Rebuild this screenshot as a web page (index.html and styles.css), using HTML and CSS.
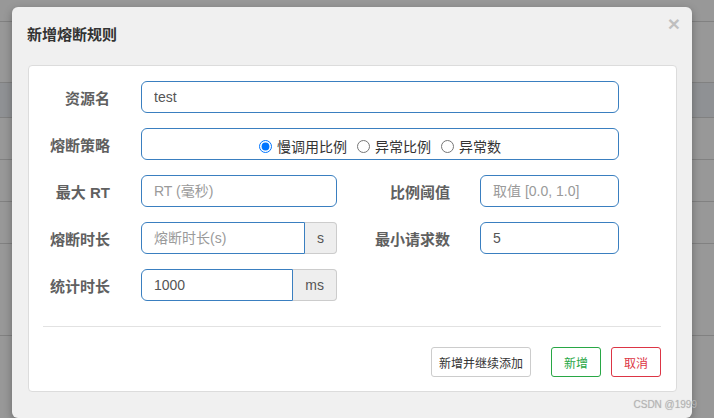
FILE: index.html
```html
<!DOCTYPE html>
<html lang="zh-CN">
<head>
<meta charset="utf-8">
<title>新增熔断规则</title>
<link rel="stylesheet" href="styles.css">
</head>
<body>
<div class="backdrop">
  <div class="bg-row h22"></div>
  <div class="bg-row h61"></div>
  <div class="bg-row h35 tint"></div>
  <div class="bg-row h42"></div>
  <div class="bg-row h42"></div>
  <div class="bg-row h42"></div>
  <div class="bg-row h92"></div>
  <div class="bg-row rest"></div>
</div>

<div class="modal">
  <div class="modal-header">
    <h4 class="modal-title">新增熔断规则</h4>
    <span class="close">×</span>
  </div>
  <div class="panel">
    <form class="form">
      <label class="lbl">资源名</label>
      <div class="field span3"><input class="inp" type="text" value="test"></div>

      <label class="lbl">熔断策略</label>
      <div class="radio-box span3">
        <label class="radio"><input type="radio" name="grade" checked>慢调用比例</label>
        <label class="radio"><input type="radio" name="grade">异常比例</label>
        <label class="radio"><input type="radio" name="grade">异常数</label>
      </div>

      <label class="lbl">最大 RT</label>
      <div class="field"><input class="inp" type="text" placeholder="RT (毫秒)"></div>
      <label class="lbl lbl-2">比例阈值</label>
      <div class="field"><input class="inp" type="text" placeholder="取值 [0.0, 1.0]"></div>

      <label class="lbl">熔断时长</label>
      <div class="group"><input class="inp" type="text" placeholder="熔断时长(s)"><span class="addon">s</span></div>
      <label class="lbl lbl-2">最小请求数</label>
      <div class="field"><input class="inp" type="text" value="5"></div>

      <label class="lbl">统计时长</label>
      <div class="group"><input class="inp" type="text" value="1000"><span class="addon">ms</span></div>
    </form>
    <div class="hr"></div>
    <div class="actions">
      <button class="btn btn-default wide" type="button">新增并继续添加</button>
      <button class="btn btn-success" type="button">新增</button>
      <button class="btn btn-danger" type="button">取消</button>
    </div>
  </div>
</div>

<div class="watermark">CSDN @1999</div>
</body>
</html>
```

FILE: styles.css
```css
* { box-sizing: border-box; }

html, body {
  margin: 0;
  padding: 0;
}

body {
  width: 714px;
  height: 418px;
  overflow: hidden;
  position: relative;
  font-family: "Liberation Sans", "Noto Sans CJK SC", sans-serif;
  background: #989898;
}

.backdrop {
  display: flex;
  flex-direction: column;
  height: 418px;
}

.bg-row {
  border-bottom: 1px solid #818181;
  background: #989898;
}
.bg-row.h22 { height: 22px; }
.bg-row.h61 { height: 61px; }
.bg-row.h35 { height: 35px; }
.bg-row.h42 { height: 42px; }
.bg-row.h92 { height: 92px; }
.bg-row.rest { flex: 1; border-bottom: none; }
.bg-row.tint { background: #8f9194; }

.modal {
  position: absolute;
  left: 12px;
  top: 7px;
  width: 680px;
  height: 411px;
  background: #f0f0f0;
  border-radius: 6px;
  box-shadow: 0 3px 9px rgba(0, 0, 0, 0.3);
}

.modal-header {
  height: 58px;
  padding: 18px 15px 0 15px;
  display: flex;
  justify-content: space-between;
  align-items: flex-start;
}

.modal-title {
  margin: 0;
  font-size: 15px;
  line-height: 20px;
  font-weight: bold;
  color: #333;
}

.close {
  margin-top: -12px;
  margin-right: -3px;
  font-size: 21px;
  line-height: 21px;
  font-weight: bold;
  color: #000;
  opacity: 0.2;
}

.panel {
  margin: 0 15px 0 16px;
  background: #fff;
  border: 1px solid #dcdcdc;
  border-radius: 4px;
  padding: 15px 15px 14px 14px;
}

.form {
  display: grid;
  grid-template-columns: 98px 196px 143px 139px;
  grid-auto-rows: 32px;
  row-gap: 15px;
  align-items: center;
}

.lbl {
  text-align: right;
  padding-right: 31px;
  padding-top: 4px;
  font-size: 15px;
  font-weight: bold;
  color: #606060;
  white-space: nowrap;
  line-height: 20px;
}

.lbl-2 { padding-right: 30px; }

.field, .group, .radio-box {
  height: 32px;
}

.span3 { grid-column: 2 / 5; }

.inp {
  width: 100%;
  height: 32px;
  border: 1px solid #3a7fc0;
  border-radius: 6px;
  padding: 0 12px;
  font-family: "Liberation Sans", "Noto Sans CJK SC", sans-serif;
  font-size: 14px;
  color: #555;
  background: #fff;
  outline: none;
}

.inp::placeholder { color: #9a9a9a; }

.group {
  display: flex;
}
.group .inp {
  flex: 1;
  min-width: 0;
  border-radius: 6px 0 0 6px;
}
.addon {
  display: flex;
  align-items: center;
  justify-content: center;
  padding: 0 12px;
  background: #eee;
  border: 1px solid #ccc;
  border-left: none;
  border-radius: 0 4px 4px 0;
  font-size: 14px;
  color: #555;
}

.radio-box {
  border: 1px solid #3a7fc0;
  border-radius: 6px;
  display: flex;
  justify-content: center;
  align-items: center;
  gap: 10px;
  padding-top: 5px;
}

.radio {
  display: flex;
  align-items: center;
  font-size: 14px;
  color: #333;
  line-height: 20px;
}
.radio input {
  margin: 0 5px 0 0;
  width: 13px;
  height: 13px;
}

.hr {
  margin-top: 25px;
  border-top: 1px solid #e2e2e2;
}

.actions {
  margin-top: 20px;
  display: flex;
  justify-content: flex-end;
  gap: 10px;
}

.btn {
  height: 30px;
  width: 50px;
  padding: 0;
  font-family: "Liberation Sans", "Noto Sans CJK SC", sans-serif;
  font-size: 12px;
  background: #fff;
  border-radius: 3px;
  border: 1px solid #ccc;
  color: #333;
}
.btn.wide {
  width: 100px;
  margin-right: 10px;
}
.btn-success {
  border-color: #28a745;
  color: #28a745;
}
.btn-danger {
  border-color: #dc3545;
  color: #dc3545;
}

.watermark {
  position: absolute;
  right: 17px;
  bottom: 8px;
  font-size: 10px;
  color: #b4b4b4;
  text-shadow: 0 0 1px rgba(120, 120, 120, 0.3);
}
```
